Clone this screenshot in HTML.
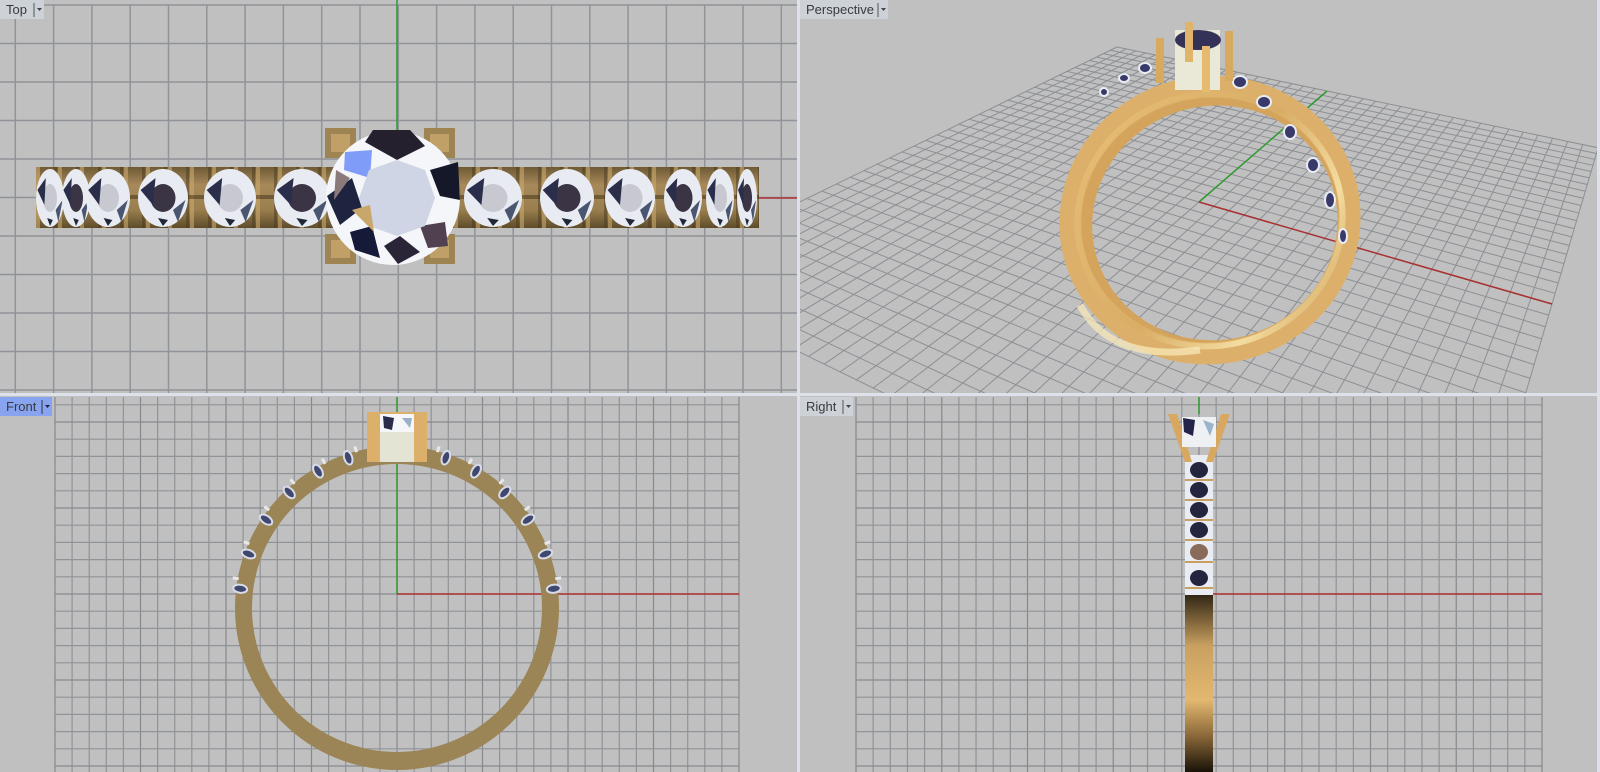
<!DOCTYPE html>
<html><head><meta charset="utf-8"><style>
html,body{margin:0;padding:0;background:#c0c0c0;}
svg{display:block}
text{font-family:"Liberation Sans",sans-serif;font-size:13px;fill:#3a3a3a}
</style></head><body>
<svg id="s" width="1600" height="772" viewBox="0 0 1600 772" xmlns="http://www.w3.org/2000/svg">
<defs>
<clipPath id="cTL"><rect x="0" y="0" width="797" height="393"/></clipPath>
<clipPath id="cTR"><rect x="800" y="0" width="797" height="393"/></clipPath>
<linearGradient id="band" x1="0" y1="0" x2="0" y2="1">
<stop offset="0" stop-color="#6e5a34"/><stop offset="0.3" stop-color="#a8895a"/><stop offset="0.7" stop-color="#9a7f4e"/><stop offset="1" stop-color="#5e4c2a"/></linearGradient>
<linearGradient id="rv" x1="0" y1="0" x2="0" y2="1">
<stop offset="0" stop-color="#2a2010"/><stop offset="0.3" stop-color="#c9a060"/><stop offset="0.6" stop-color="#e2b870"/><stop offset="0.8" stop-color="#8a6838"/><stop offset="1" stop-color="#1a1208"/></linearGradient>
<linearGradient id="pg" x1="0" y1="0" x2="1" y2="1">
<stop offset="0" stop-color="#e8bf78"/><stop offset="0.5" stop-color="#d9ad66"/><stop offset="0.75" stop-color="#f4dca0"/><stop offset="1" stop-color="#c8994f"/></linearGradient>
<pattern id="rid" x="36" y="0" width="22" height="60" patternUnits="userSpaceOnUse">
<rect width="22" height="60" fill="none"/><rect x="0" y="0" width="4" height="60" fill="#c9a86a" opacity="0.6"/><rect x="18" y="0" width="3" height="60" fill="#4a3a20" opacity="0.5"/></pattern>
</defs>

<g clip-path="url(#cTL)" id="topgrid" stroke="#909398" stroke-width="1.5"></g>
<rect x="36" y="167" width="723" height="61" fill="url(#band)"/>
<rect x="36" y="167" width="723" height="61" fill="url(#rid)"/>
<rect x="36" y="195" width="723" height="4" fill="#3e3018" opacity="0.5"/>
<g id="topstones"></g>
<line x1="397" y1="0" x2="397" y2="132" stroke="#2e9a2e" stroke-width="1.5"/>
<line x1="759" y1="198" x2="797" y2="198" stroke="#b03030" stroke-width="1.5"/>
<g>
<rect x="325" y="128" width="31" height="30" fill="#9e8452"/><rect x="331" y="134" width="19" height="18" fill="#c0a066"/>
<rect x="424" y="128" width="31" height="30" fill="#9e8452"/><rect x="430" y="134" width="19" height="18" fill="#c0a066"/>
<rect x="325" y="234" width="31" height="30" fill="#9e8452"/><rect x="331" y="240" width="19" height="18" fill="#c0a066"/>
<rect x="424" y="234" width="31" height="30" fill="#9e8452"/><rect x="430" y="240" width="19" height="18" fill="#c0a066"/>
</g>
<circle cx="393" cy="198" r="67" fill="#f4f6fa"/>
<polygon points="373,130 410,130 425,146 397,160 365,142" fill="#24202e"/>
<polygon points="345,152 372,150 370,178 344,170" fill="#7f9cf8"/>
<polygon points="327,196 352,178 362,208 340,225" fill="#1e2440"/>
<polygon points="350,232 372,226 380,258 355,250" fill="#141a38"/>
<polygon points="384,246 400,236 420,252 398,264" fill="#2a2536"/>
<polygon points="420,226 445,222 448,246 428,248" fill="#504050"/>
<polygon points="430,170 458,162 460,200 440,196" fill="#151828"/>
<polygon points="336,170 350,178 334,200" fill="#8a7a7a"/>
<polygon points="397,160 425,170 435,198 425,226 397,236 369,226 359,198 369,170" fill="#cfd5e4"/>
<polygon points="352,210 370,205 374,232" fill="#c9a66a"/>

<g clip-path="url(#cTR)" id="pgrid" stroke="#8c8f94" stroke-width="1"></g>
<g clip-path="url(#cTR)">
<line x1="1199" y1="202" x2="1327" y2="91" stroke="#2e9a2e" stroke-width="1.5"/>
<line x1="1199" y1="202" x2="1552" y2="304" stroke="#a83030" stroke-width="1.5"/>
<g transform="rotate(-14 1210 220)">
<ellipse cx="1214" cy="224" rx="130" ry="124" fill="none" stroke="#d4a45c" stroke-width="14"/>
<ellipse cx="1210" cy="220" rx="140" ry="133" fill="none" stroke="#dcb06a" stroke-width="22"/>
<ellipse cx="1210" cy="220" rx="133" ry="126" fill="none" stroke="url(#pg)" stroke-width="6"/>
</g>
<path d="M1080 305 Q1110 362 1200 350" fill="none" stroke="#f8e8b8" stroke-width="7" opacity="0.75"/>
<g fill="#3a3a6a" stroke="#e8ecf4" stroke-width="2">
<ellipse cx="1240" cy="82" rx="7" ry="6"/><ellipse cx="1264" cy="102" rx="7" ry="6"/><ellipse cx="1290" cy="132" rx="6" ry="7"/><ellipse cx="1313" cy="165" rx="6" ry="7"/><ellipse cx="1330" cy="200" rx="5" ry="8"/><ellipse cx="1343" cy="236" rx="4" ry="7"/>
<ellipse cx="1145" cy="68" rx="6" ry="5"/><ellipse cx="1124" cy="78" rx="5" ry="4"/><ellipse cx="1104" cy="92" rx="4" ry="4"/>
</g>
<rect x="1175" y="30" width="45" height="60" fill="#eae8d6"/>
<ellipse cx="1198" cy="40" rx="23" ry="10" fill="#353258"/>
<rect x="1156" y="38" width="8" height="45" fill="#d8aa60"/><rect x="1185" y="22" width="8" height="40" fill="#e0b46a"/>
<rect x="1225" y="31" width="8" height="50" fill="#d8aa60"/><rect x="1202" y="46" width="8" height="46" fill="#e6bb70"/>
</g>

<g id="fgrid" stroke="#909398" stroke-width="1.2"></g>
<line x1="397" y1="397" x2="397" y2="594" stroke="#2e9a2e" stroke-width="1.5"/>
<line x1="397" y1="594" x2="739" y2="594" stroke="#b03030" stroke-width="1.5"/>
<path d="M235 608 A162 162 0 1 0 559 608 A162 162 0 1 0 235 608 Z M252 608 A145 144 0 1 1 542 608 A145 144 0 1 1 252 608 Z" fill="#9b8455" fill-rule="evenodd"/>
<g id="fstones"></g>
<rect x="367" y="412" width="60" height="50" fill="#dcb06a"/>
<rect x="380" y="414" width="34" height="48" fill="#e4e4d4"/>
<polygon points="380,414 414,414 414,432 380,432" fill="#f4f6fa"/>
<polygon points="383,416 394,418 392,430 384,428" fill="#2a2a4a"/>
<polygon points="402,418 412,418 410,428" fill="#9ab0c8"/>

<g id="rgrid" stroke="#909398" stroke-width="1.2"></g>
<line x1="1199" y1="397" x2="1199" y2="414" stroke="#2e9a2e" stroke-width="1.5"/>
<line x1="1213" y1="594" x2="1542" y2="594" stroke="#b03030" stroke-width="1.5"/>
<rect x="1185" y="592" width="28" height="180" fill="url(#rv)"/>
<rect x="1185" y="455" width="28" height="140" fill="#e9ecf2"/>
<g fill="#1e2038" id="rst"></g>
<polygon points="1168,414 1177,414 1192,462 1185,462" fill="#d8a860"/>
<polygon points="1221,414 1230,414 1213,462 1206,462" fill="#d8a860"/>
<rect x="1182" y="417" width="34" height="30" fill="#eef0f4"/>
<polygon points="1183,418 1195,420 1193,436 1184,432" fill="#24244a"/>
<polygon points="1203,420 1214,424 1210,436" fill="#9ab4cc"/>

<rect x="797" y="0" width="3" height="772" fill="#dde1ea"/>
<rect x="0" y="393" width="1600" height="3" fill="#dde1ea"/>
<rect x="1597" y="0" width="3" height="772" fill="#dde1ea"/>

<rect x="0" y="0" width="44" height="19" fill="#cdd1d8"/><text x="6" y="14">Top</text>
<line x1="34" y1="3" x2="34" y2="17" stroke="#555"/><polygon points="37,8 42,8 39.5,11" fill="#444"/>
<rect x="800" y="0" width="88" height="19" fill="#cdd1d8"/><text x="806" y="14">Perspective</text>
<line x1="878" y1="3" x2="878" y2="17" stroke="#555"/><polygon points="881,8 886,8 883.5,11" fill="#444"/>
<rect x="0" y="397" width="52" height="19" fill="#88a4f0"/><text x="6" y="411">Front</text>
<line x1="42" y1="400" x2="42" y2="414" stroke="#334"/><polygon points="45,405 50,405 47.5,408" fill="#223"/>
<rect x="800" y="397" width="53" height="19" fill="#cdd1d8"/><text x="806" y="411">Right</text>
<line x1="843" y1="400" x2="843" y2="414" stroke="#555"/><polygon points="846,405 851,405 848.5,408" fill="#444"/>
</svg>
<script>
var NS="http://www.w3.org/2000/svg";
function L(g,x1,y1,x2,y2,st,sw){var l=document.createElementNS(NS,"line");l.setAttribute("x1",x1);l.setAttribute("y1",y1);l.setAttribute("x2",x2);l.setAttribute("y2",y2);if(st)l.setAttribute("stroke",st);if(sw)l.setAttribute("stroke-width",sw);g.appendChild(l);}
function E(g,tag,a){var e=document.createElementNS(NS,tag);for(var k in a)e.setAttribute(k,a[k]);g.appendChild(e);return e;}
var tg=document.getElementById("topgrid");
for(var x=15.3;x<800;x+=38.3)L(tg,x,5,x,393);
for(var y=5;y<393;y+=38.5)L(tg,0,y,797,y);
var fg=document.getElementById("fgrid");
for(var i=0;i<=40;i++){var x=55+i*17.1;L(fg,x,397,x,772,i%5==0?"#86898e":null);}
for(var j=-11;j<=10;j++){var y=594+j*17.2;if(y>=397)L(fg,55,y,739,y,j%5==0?"#86898e":null);}
var rg=document.getElementById("rgrid");
for(var i=0;i<=40;i++){var x=856+i*17.15;L(rg,x,397,x,772,i%5==0?"#86898e":null);}
for(var j=-11;j<=10;j++){var y=594+j*17.2;if(y>=397)L(rg,856,y,1542,y,j%5==0?"#86898e":null);}
function solve(A,b){var n=b.length;for(var i=0;i<n;i++){var m=i;for(var r=i+1;r<n;r++)if(Math.abs(A[r][i])>Math.abs(A[m][i]))m=r;var t=A[i];A[i]=A[m];A[m]=t;t=b[i];b[i]=b[m];b[m]=t;for(var r=i+1;r<n;r++){var f=A[r][i]/A[i][i];for(var c=i;c<n;c++)A[r][c]-=f*A[i][c];b[r]-=f*b[i];}}var x=new Array(n);for(var i=n-1;i>=0;i--){var s=b[i];for(var c=i+1;c<n;c++)s-=A[i][c]*x[c];x[i]=s/A[i][i];}return x;}
var P=[[0,0,1199,202],[20,0,1552,304],[0,20,1327,91],[-20,20,1117,47]];
var A=[],b=[];P.forEach(function(p){var X=p[0],Y=p[1],u=p[2],v=p[3];A.push([X,Y,1,0,0,0,-u*X,-u*Y]);b.push(u);A.push([0,0,0,X,Y,1,-v*X,-v*Y]);b.push(v);});
var h=solve(A,b);
function H(X,Y){var w=h[6]*X+h[7]*Y+1;return[(h[0]*X+h[1]*Y+h[2])/w,(h[3]*X+h[4]*Y+h[5])/w];}
var pg=document.getElementById("pgrid");
for(var i=-20;i<=20;i++){var a=H(i,-20),c=H(i,20);L(pg,a[0],a[1],c[0],c[1]);a=H(-20,i);c=H(20,i);L(pg,a[0],a[1],c[0],c[1]);}
var ts=document.getElementById("topstones");
var st=[[50,14],[76,14],[108,22],[163,25],[230,26],[302,28],[493,29],[567,27],[630,25],[683,19],[720,14],[747,10]];
st.forEach(function(s,k){E(ts,"ellipse",{cx:s[0],cy:198,rx:s[1],ry:29,fill:"#e8ebf2"});
E(ts,"ellipse",{cx:s[0],cy:198,rx:s[1]*0.5,ry:14,fill:k%2?"#3a3444":"#c8c8d0"});
E(ts,"polygon",{points:(s[0]-s[1]*0.9)+",190 "+(s[0]-s[1]*0.3)+",178 "+(s[0]-s[1]*0.4)+",205",fill:"#2a2e4a"});
E(ts,"polygon",{points:(s[0]+s[1]*0.4)+",210 "+(s[0]+s[1]*0.9)+",200 "+(s[0]+s[1]*0.6)+",222",fill:"#4a5670"});
E(ts,"polygon",{points:(s[0]-s[1]*0.2)+",218 "+(s[0]+s[1]*0.2)+",220 "+(s[0])+",226",fill:"#202838"});});
var fs=document.getElementById("fstones");
[-18,-30,-43,-56,-70,-83].forEach(function(d){[1,-1].forEach(function(sg){var a=(d*sg)*Math.PI/180;var r=158;var x=397+r*Math.sin(-a),y=608-r*Math.cos(a);
E(fs,"ellipse",{cx:x,cy:y,rx:4,ry:7,fill:"#404870",stroke:"#d8dce8","stroke-width":2,transform:"rotate("+(-d*sg)+" "+x+" "+y+")"});
var r2=164,a2=a+sg*0.06;var x2=397+r2*Math.sin(-a2),y2=608-r2*Math.cos(a2);E(fs,"rect",{x:x2-1.5,y:y2-3,width:3,height:6,fill:"#e8e8e8",transform:"rotate("+(-d*sg)+" "+x2+" "+y2+")"});});});
var rs=document.getElementById("rst");
[470,490,510,530,552,578].forEach(function(y,k){E(rs,"ellipse",{cx:1199,cy:y,rx:9,ry:8,fill:k==4?"#8a6a58":"#24243e"});E(rs,"rect",{x:1185,y:y+9,width:28,height:2,fill:"#c8a060"});});
</script>
</body></html>
